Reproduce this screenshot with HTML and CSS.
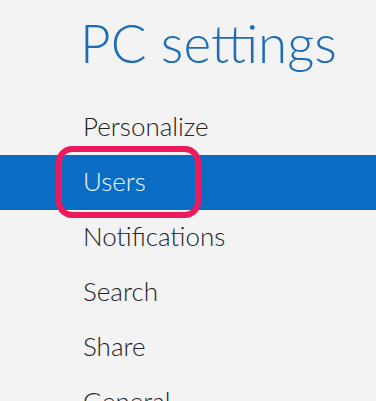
FILE: index.html
```html
<!DOCTYPE html>
<html lang="en">
<head>
    <meta charset="UTF-8">
    <meta name="viewport" content="width=device-width, initial-scale=1.0">
    <title>PC settings</title>
    <link rel="stylesheet" href="styles.css">
</head>
<body>
    <div class="settings">
        <!-- Заголовок -->
        <h1 class="title">PC settings</h1>
        <!-- Список разделов -->
        <nav class="menu">
            <a href="#" class="menu-item">Personalize</a>
            <a href="#" class="menu-item active">Users<span class="mark"></span></a>
            <a href="#" class="menu-item">Notifications</a>
            <a href="#" class="menu-item">Search</a>
            <a href="#" class="menu-item">Share</a>
            <a href="#" class="menu-item">General</a>
        </nav>
    </div>
</body>
</html>
```

FILE: styles.css
```css
body {
    margin: 0;
    background: #f3f3f3;
    font-family: 'Lato', 'Open Sans', sans-serif;
    font-weight: 300;
    color: #222;
    overflow: hidden;
}

.settings {
    height: 401px;
}

.title {
    margin: 0;
    height: 100px;
    padding-left: 80px;
    font-size: 53px;
    font-weight: 300;
    line-height: 86px;
    color: #1c6db5;
    box-sizing: border-box;
}

.menu {
    display: flex;
    flex-direction: column;
}

.menu-item {
    position: relative;
    display: block;
    height: 55px;
    padding-left: 83px;
    font-size: 26px;
    font-weight: 300;
    line-height: 52px;
    color: #222;
    text-decoration: none;
}

.menu-item.active {
    background: #0a6cc2;
    color: #e6f6ff;
}

/* Розовая рамка вокруг выбранного пункта */
.mark {
    position: absolute;
    left: 56px;
    top: -9px;
    width: 145px;
    height: 72px;
    border: 6px solid #ec1a5c;
    border-radius: 16px;
    box-sizing: border-box;
}
```
